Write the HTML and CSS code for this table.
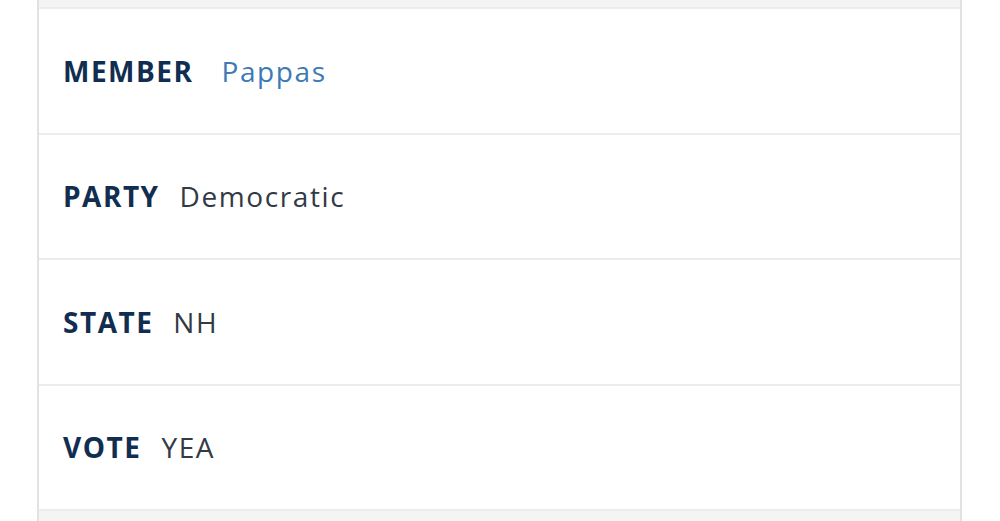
FILE: index.html
```html
<!DOCTYPE html>
<html lang="en">
<head>
<meta charset="utf-8">
<title>Vote record</title>
<link rel="stylesheet" href="styles.css">
</head>
<body>
<div class="page">
  <div class="card">
    <div class="row"><span class="label">MEMBER</span><a class="value link" href="#">Pappas</a></div>
    <div class="row"><span class="label">PARTY</span><span class="value">Democratic</span></div>
    <div class="row"><span class="label">STATE</span><span class="value">NH</span></div>
    <div class="row"><span class="label">VOTE</span><span class="value">YEA</span></div>
  </div>
</div>
</body>
</html>
```
FILE: styles.css
```css
html, body {
  margin: 0;
  padding: 0;
  background: #ffffff;
}
body {
  font-family: "Open Sans", "Noto Sans", sans-serif;
  height: 521px;
  overflow: hidden;
}
.page {
  width: 925px;
  margin-left: 37px;
  padding-top: 7px;
  background: #f4f4f4;
  border-left: 2px solid #e2e2e2;
  border-right: 2px solid #e2e2e2;
  box-sizing: border-box;
  height: 521px;
}
.card {
  background: #ffffff;
  border-top: 2px solid #ececec;
}
.row {
  height: 123.5px;
  border-bottom: 2px solid #ececec;
  display: flex;
  align-items: center;
  padding-left: 24px;
  gap: 20px;
  box-sizing: content-box;
}
.label {
  font-weight: 700;
  font-size: 28px;
  letter-spacing: 1.5px;
  color: #112e51;
}
.value {
  font-size: 28px;
  letter-spacing: 1.6px;
  color: #323a45;
}
.link {
  color: #3c7ab6;
  text-decoration: none;
  margin-left: 8px;
}
```
